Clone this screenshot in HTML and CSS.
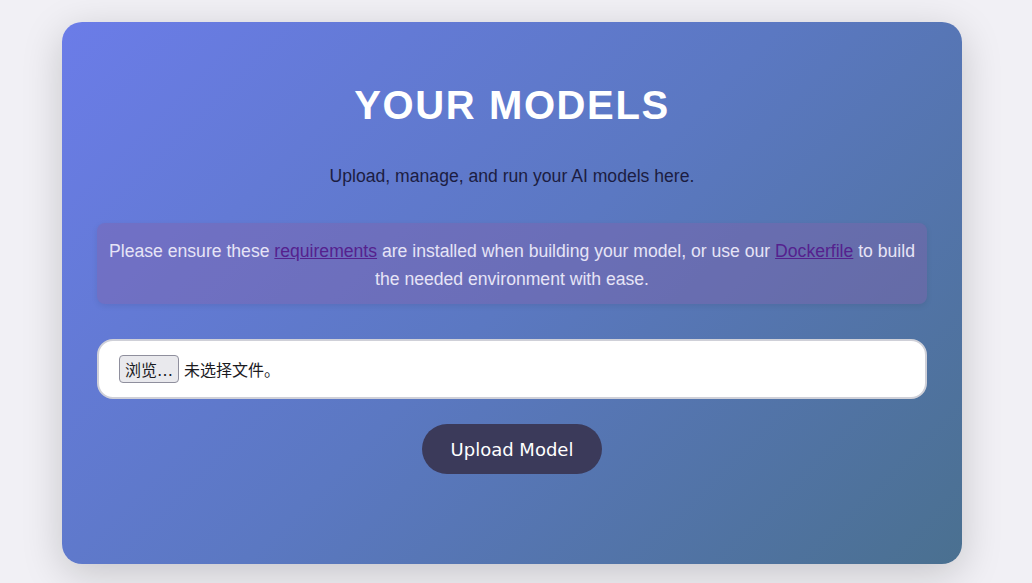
FILE: index.html
```html
<!DOCTYPE html>
<html lang="en">
<head>
<meta charset="utf-8">
<title>Your Models</title>
<link rel="stylesheet" href="styles.css">
</head>
<body>
<main class="card">
  <h1 class="title">YOUR MODELS</h1>
  <p class="subtitle">Upload, manage, and run your AI models here.</p>
  <div class="notice">
    Please ensure these <a href="#" class="link">requirements</a> are installed when building your model, or use our <a href="#" class="link">Dockerfile</a> to build the needed environment with ease.
  </div>
  <form class="upload-form">
    <label class="file-field">
      <span class="file-btn">浏览…</span>
      <span class="file-name">未选择文件。</span>
    </label>
    <button type="button" class="upload-btn">Upload Model</button>
  </form>
</main>
</body>
</html>
```
FILE: styles.css
```css
html, body {
  margin: 0;
  padding: 0;
}
body {
  background: #f1f0f5;
  font-family: "Liberation Sans", Arial, sans-serif;
  height: 583px;
  overflow: hidden;
}
.card {
  box-sizing: border-box;
  width: 900px;
  height: 542px;
  margin: 22px 0 0 62px;
  padding: 60px 35px 0;
  border-radius: 20px;
  background: linear-gradient(135deg, #6b7ce8 0%, #5b78c2 50%, #4a7090 100%);
  box-shadow: 0 10px 40px rgba(0, 0, 0, 0.18);
  text-align: center;
}
.title {
  margin: 0;
  font-size: 40px;
  line-height: 46px;
  font-weight: bold;
  letter-spacing: 1.6px;
  color: #ffffff;
}
.subtitle {
  margin: 36px 0 0;
  font-size: 17.6px;
  line-height: 24px;
  color: #1c1d42;
}
.notice {
  margin-top: 35px;
  padding: 14px 10px 11px;
  border-radius: 8px;
  background: rgba(128, 98, 170, 0.42);
  box-shadow: 0 2px 6px rgba(0, 0, 0, 0.08);
  font-size: 17.6px;
  line-height: 28px;
  color: #e6e4f6;
}
.link {
  color: #55218e;
  text-decoration: underline;
}
.upload-form {
  display: flex;
  flex-direction: column;
  align-items: center;
  margin-top: 35px;
}
.file-field {
  box-sizing: border-box;
  display: flex;
  align-items: center;
  gap: 5px;
  width: 100%;
  height: 60px;
  padding: 0 20px;
  background: #ffffff;
  border: 2px solid #cfd0d8;
  border-radius: 16px;
  font-family: "DejaVu Sans", "Noto Sans CJK SC", sans-serif;
  font-size: 16px;
  color: #1b1b1f;
}
.file-btn {
  box-sizing: border-box;
  height: 28px;
  padding: 0 5px;
  display: flex;
  align-items: center;
  background: #e9e9ed;
  border: 1px solid #8f8f9d;
  border-radius: 4px;
}
.upload-btn {
  margin-top: 25px;
  width: 180px;
  height: 50px;
  border: none;
  border-radius: 25px;
  background: #3b3a5a;
  color: #ffffff;
  font-family: "DejaVu Sans", sans-serif;
  font-size: 18px;
  cursor: pointer;
}
```
